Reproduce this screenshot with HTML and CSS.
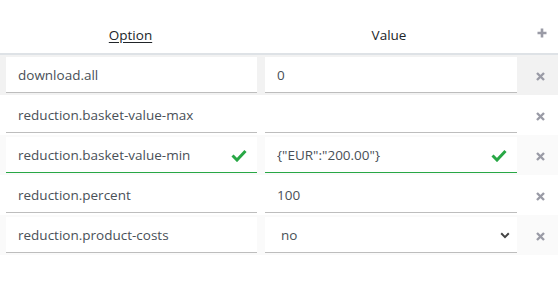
FILE: index.html
```html
<!DOCTYPE html>
<html lang="en">
<head>
    <meta charset="UTF-8">
    <meta name="viewport" content="width=device-width, initial-scale=1.0">
    <title>Options</title>
    <link rel="stylesheet" href="styles.css">
</head>
<body>
    <table class="config-table">
        <colgroup>
            <col class="col-option">
            <col class="col-value">
            <col class="col-action">
        </colgroup>
        <thead>
            <tr>
                <th><span class="sortable">Option</span></th>
                <th>Value</th>
                <th>
                    <svg class="icon" width="10" height="10" viewBox="0 0 10 10"><path d="M5 0.5v9M0.5 5h9" stroke="currentColor" stroke-width="2.6"/></svg>
                </th>
            </tr>
        </thead>
        <tbody>
            <tr class="row-active">
                <td><div class="field"><input type="text" value="download.all"></div></td>
                <td><div class="field"><input type="text" value="0"></div></td>
                <td class="action"><svg class="icon" width="9" height="9" viewBox="0 0 9 9"><path d="M1 1l7 7M8 1l-7 7" stroke="currentColor" stroke-width="2.4"/></svg></td>
            </tr>
            <tr>
                <td><div class="field"><input type="text" value="reduction.basket-value-max"></div></td>
                <td><div class="field"><input type="text" value=""></div></td>
                <td class="action"><svg class="icon" width="9" height="9" viewBox="0 0 9 9"><path d="M1 1l7 7M8 1l-7 7" stroke="currentColor" stroke-width="2.4"/></svg></td>
            </tr>
            <tr class="row-striped">
                <td>
                    <div class="field is-valid">
                        <input type="text" value="reduction.basket-value-min">
                        <svg class="check" width="16" height="13" viewBox="0 0 16 13"><path d="M1.5 6.5l4.5 4.5 8.5-9" fill="none" stroke="currentColor" stroke-width="3"/></svg>
                    </div>
                </td>
                <td>
                    <div class="field is-valid">
                        <input type="text" value='{"EUR":"200.00"}'>
                        <svg class="check" width="16" height="13" viewBox="0 0 16 13"><path d="M1.5 6.5l4.5 4.5 8.5-9" fill="none" stroke="currentColor" stroke-width="3"/></svg>
                    </div>
                </td>
                <td class="action"><svg class="icon" width="9" height="9" viewBox="0 0 9 9"><path d="M1 1l7 7M8 1l-7 7" stroke="currentColor" stroke-width="2.4"/></svg></td>
            </tr>
            <tr>
                <td><div class="field"><input type="text" value="reduction.percent"></div></td>
                <td><div class="field"><input type="text" value="100"></div></td>
                <td class="action"><svg class="icon" width="9" height="9" viewBox="0 0 9 9"><path d="M1 1l7 7M8 1l-7 7" stroke="currentColor" stroke-width="2.4"/></svg></td>
            </tr>
            <tr class="row-striped">
                <td><div class="field"><input type="text" value="reduction.product-costs"></div></td>
                <td>
                    <div class="field">
                        <select>
                            <option>no</option>
                            <option>yes</option>
                        </select>
                        <svg class="chevron" width="10" height="7" viewBox="0 0 10 7"><path d="M1.2 1.3l3.8 3.8 3.8-3.8" fill="none" stroke="currentColor" stroke-width="2"/></svg>
                    </div>
                </td>
                <td class="action"><svg class="icon" width="9" height="9" viewBox="0 0 9 9"><path d="M1 1l7 7M8 1l-7 7" stroke="currentColor" stroke-width="2.4"/></svg></td>
            </tr>
        </tbody>
    </table>
</body>
</html>
```

FILE: styles.css
```css
body {
    margin: 0;
    padding: 0;
    background: #ffffff;
    font-family: "Open Sans", Arial, sans-serif;
    font-size: 13px;
    color: #333;
}

.config-table {
    width: 100%;
    border-collapse: collapse;
    table-layout: fixed;
}

.col-option {
    width: 261px;
}

.col-value {
    width: 256px;
}

.col-action {
    width: 41px;
}

th {
    height: 45px;
    padding: 0 0 8px 0;
    font-weight: normal;
    font-size: 13.5px;
    line-height: 19px;
    color: #212529;
    text-align: center;
    vertical-align: bottom;
    border-bottom: 2px solid #dee2e6;
}

.sortable {
    text-decoration: underline;
    text-underline-offset: 2px;
}

td {
    height: 36px;
    padding: 2px 0 2px 4px;
    vertical-align: middle;
}

td:first-child {
    padding: 2px 4px 2px 6px;
}

.row-active td {
    background: #f2f2f2;
}

.row-striped td {
    background: #fafafa;
}

.field {
    position: relative;
}

.field input,
.field select {
    display: block;
    width: 100%;
    box-sizing: border-box;
    height: 36px;
    padding: 0 12px;
    border: 0;
    border-bottom: 1px solid #bdbdbd;
    background: #ffffff;
    font-family: inherit;
    font-size: 13.5px;
    color: #495057;
    outline: none;
}

.field select {
    appearance: none;
    -webkit-appearance: none;
    padding-left: 16px;
    border-radius: 0;
}

.is-valid input {
    border-bottom-color: #28a745;
    padding-right: 36px;
}

.check {
    position: absolute;
    right: 10px;
    top: 12px;
    color: #28a745;
}

.chevron {
    position: absolute;
    right: 7px;
    top: 15px;
    color: #444;
    pointer-events: none;
}

.action {
    padding: 2px 0;
    text-align: center;
}

.icon {
    display: inline-block;
    vertical-align: middle;
    color: #9a9ba6;
    margin-left: 6px;
}

th .icon {
    margin-left: 8px;
    margin-bottom: 2px;
    vertical-align: baseline;
}
```
